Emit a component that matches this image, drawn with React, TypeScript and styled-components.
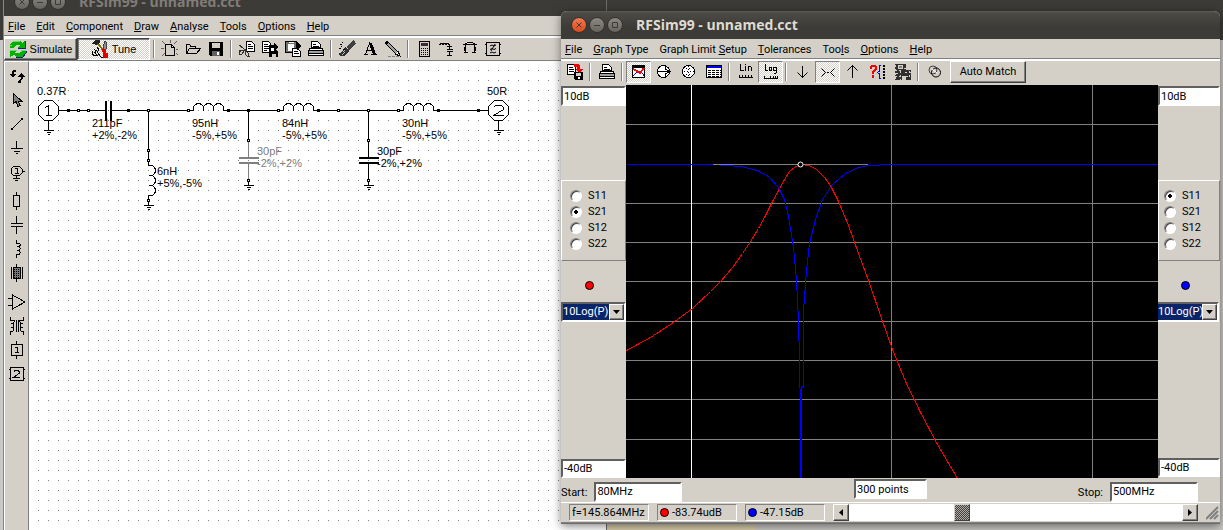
import React from "react";
import styled, { createGlobalStyle, css } from "styled-components";

const face = "#d4d0c8";
const uiFont = `Roboto, "Liberation Sans", sans-serif`;
const arial = `"Liberation Sans", Arial, sans-serif`;

const GlobalStyle = createGlobalStyle`
  * { box-sizing: border-box; }
  body { margin: 0; background: #c9c8c5; color: #000; font: 11px/16px ${uiFont}; }
  button, input, select { font: inherit; color: inherit; margin: 0; border-radius: 0; }
`;

const raised = css`
  border: 1px solid;
  border-color: #fff #404040 #404040 #fff;
  box-shadow: inset -1px -1px 0 #808080;
`;
const checker = css`
  background: repeating-conic-gradient(#fff 0 25%, ${face} 0 50%) 0 0 / 2px 2px;
`;

const Desktop = styled.main`
  position: relative;
  min-height: 100vh;
  overflow: hidden;
  background:
    linear-gradient(90deg, transparent 607px, #d8cca8 607px 755px, transparent 755px) bottom / 100% 5px no-repeat,
    linear-gradient(#3c3b37 40px, #c9c8c5 40px);
`;
const BackWindow = styled.section`
  position: absolute;
  top: -12px;
  left: 3px;
  bottom: 0;
  width: 604px;
  display: flex;
  flex-direction: column;
  background: ${face};
  border-left: 1px solid #8a8883;
  border-right: 1px solid #6f6d69;
`;
const FrontWindow = styled.section`
  position: absolute;
  top: 11px;
  left: 561px;
  right: 3px;
  bottom: 6px;
  display: flex;
  flex-direction: column;
  background: ${face};
  border-radius: 6px 6px 0 0;
  border-bottom: 1px solid #6f6d69;
  box-shadow: 0 2px 10px rgba(0, 0, 0, 0.5);
`;
const TitleBar = styled.header<{ $active?: boolean }>`
  flex: none;
  height: 28px;
  display: flex;
  align-items: center;
  padding: 0 10px;
  border-radius: 6px 6px 0 0;
  background: ${(p) => (p.$active ? "linear-gradient(#5c5b56, #4b4a45 2px, #3c3b37 16px)" : "#3c3b37")};
  color: ${(p) => (p.$active ? "#dfdbd2" : "#807d78")};
`;
const TitleText = styled.h1`
  margin: 0 0 0 11px;
  font: bold 14px/20px "Open Sans", sans-serif;
  white-space: nowrap;
`;
const TitleButton = styled.button<{ $close?: boolean }>`
  width: 16px;
  height: 16px;
  margin-right: 2px;
  padding: 0;
  border: 1px solid #33322e;
  border-radius: 50%;
  display: grid;
  place-items: center;
  color: #3c3b37;
  background: ${(p) => (p.$close ? "linear-gradient(#f37a50, #dc4a1c)" : "linear-gradient(#8a8881, #66645e)")};
`;
const MenuBar = styled.nav`
  flex: none;
  display: flex;
  height: 20px;
  padding-top: 2px;
  border-bottom: 1px solid #808080;
`;
const MenuItem = styled.button`
  border: 0;
  padding: 1px 7px 0 4px;
  height: 17px;
  line-height: 16px;
  background: none;
  white-space: nowrap;
`;
const ToolBar = styled.div<{ $front?: boolean }>`
  flex: none;
  display: flex;
  align-items: flex-start;
  height: ${(p) => (p.$front ? 26 : 25)}px;
  padding-left: ${(p) => (p.$front ? 1 : 0)}px;
  border-top: 2px solid #fff;
  border-bottom: ${(p) => (p.$front ? "0" : "1px solid #808080")};
`;
const Separator = styled.span<{ $tight?: boolean }>`
  flex: none;
  width: 2px;
  height: 18px;
  margin: ${(p) => (p.$tight ? "2px 3px 0 2px" : "2px 3px 0")};
  border-left: 1px solid #808080;
  border-right: 1px solid #fff;
`;
const ToolButton = styled.button<{ $size?: number; $down?: boolean }>`
  flex: none;
  width: ${(p) => p.$size ?? 23}px;
  height: 22px;
  padding: 0;
  display: grid;
  place-items: center;
  border: 1px solid transparent;
  background: none;
  ${(p) => p.$down && css`${checker} border-color: #808080 #fff #fff #808080;`}
`;
const TextButton = styled.button<{ $down?: boolean; $arial?: boolean }>`
  flex: none;
  height: 22px;
  padding: 0;
  width: ${(p) => (p.$arial ? 73 : 76)}px;
  margin-left: ${(p) => (p.$arial ? 0 : 3)}px;
  display: flex;
  align-items: center;
  justify-content: center;
  gap: 3px;
  background: ${face};
  font-family: ${(p) => (p.$arial ? arial : uiFont)};
  ${raised}
  ${(p) => p.$down && css`${checker} border-color: #404040 #fff #fff #404040; box-shadow: inset 1px 1px 0 #808080;`}
`;

const Workspace = styled.div`
  flex: 1;
  min-height: 0;
  display: flex;
`;
const Palette = styled.div`
  flex: none;
  width: 25px;
  padding-top: 2px;
  display: flex;
  flex-direction: column;
  gap: 5px;
  border-top: 1px solid #fff;
  border-left: 1px solid #fff;
  border-right: 1px solid #808080;
`;
const PaletteGroup = styled.div`
  display: flex;
  flex-direction: column;
`;
const PaletteButton = styled.button`
  height: 24px;
  padding: 0;
  border: 0;
  background: none;
  display: grid;
  place-items: center;
`;
const Canvas = styled.div`
  flex: 1;
  min-width: 0;
  background: #fff;
  overflow: hidden;
`;
const Drawing = styled.svg`
  display: block;
  width: 100%;
  height: 100%;
`;

const Plot = styled.div`
  flex: 1;
  min-height: 0;
  display: flex;
`;
const Side = styled.div<{ $right?: boolean }>`
  flex: none;
  width: ${(p) => (p.$right ? 62 : 65)}px;
  padding-top: 1px;
  padding-bottom: ${(p) => (p.$right ? 1 : 0)}px;
  display: flex;
  flex-direction: column;
`;
const Field = styled.input<{ $w?: number; $push?: boolean }>`
  width: ${(p) => (p.$w ? p.$w + "px" : "100%")};
  height: ${(p) => (p.$push ? 19 : 20)}px;
  margin-top: ${(p) => (p.$push ? "auto" : "0")};
  padding: 0 1px;
  background: #fff;
  border: 2px solid;
  border-color: #606060 #fff #fff #606060;
  outline: none;
`;
const Traces = styled.fieldset<{ $right?: boolean }>`
  margin: 74px 0 0;
  min-width: 0;
  height: 81px;
  border: 1px solid;
  border-color: #fff #808080 #808080 #fff;
  padding: 7px 0 0 ${(p) => (p.$right ? 5 : 8)}px;
`;
const Trace = styled.label`
  display: flex;
  align-items: center;
  gap: 6px;
  height: 16px;
  line-height: 18px;
`;
const Radio = styled.input`
  appearance: none;
  width: 12px;
  height: 12px;
  border: 1px solid;
  border-color: #808080 #fff #fff #808080;
  border-radius: 50%;
  box-shadow: inset 1px 1px 0 #404040;
  background: #fff;
  &:checked { background: radial-gradient(circle, #000 2px, #fff 2px); }
`;
const Dot = styled.span<{ $c: string; $big?: boolean }>`
  flex: none;
  width: 9px;
  height: 9px;
  border: 1px solid #000;
  border-radius: 50%;
  background: ${(p) => p.$c};
  ${(p) => p.$big && "align-self: center; margin: 20px 8px 12px 0;"}
`;
const Combo = styled.div<{ $right?: boolean }>`
  display: flex;
  height: 20px;
  border: 2px solid;
  border-color: #606060 #fff #fff #606060;
  ${(p) => p.$right && "border-left: 0; margin-right: 1px;"}
  background: #fff;
`;
const ComboSelect = styled.select`
  appearance: none;
  flex: 1;
  min-width: 0;
  border: 0;
  padding: 0;
  outline: 0;
  line-height: 14px;
  background: #0a246a;
  color: #fff;
`;
const ComboArrow = styled.span`
  flex: none;
  width: 15px;
  display: grid;
  place-items: center;
  background: ${face};
  ${raised}
`;
const Screen = styled.svg`
  display: block;
  flex: 1;
  min-width: 0;
  width: 0;
  height: 100%;
  background: #000;
`;
const Range = styled.div`
  flex: none;
  display: grid;
  grid-template-columns: 1fr auto 1fr;
  align-items: start;
  height: 24px;
  padding-top: 1px;
`;
const RangeCell = styled.label<{ $end?: boolean }>`
  display: flex;
  justify-content: ${(p) => (p.$end ? "flex-end" : "flex-start")};
  gap: 7px;
  padding: 3px ${(p) => (p.$end ? 22 : 0)}px 0 0;
  line-height: 22px;
`;
const Status = styled.footer`
  flex: none;
  height: 21px;
  display: flex;
  align-items: center;
  gap: 8px;
  padding: 0 0 0 8px;
  border-top: 1px solid #fff;
  border-bottom: 1px solid #808080;
`;
const Panel = styled.output`
  flex: none;
  width: 80px;
  height: 17px;
  padding-left: 2px;
  display: flex;
  align-items: center;
  gap: 3px;
  white-space: nowrap;
  border: 1px solid;
  border-color: #808080 #fff #fff #808080;
`;
const ScrollBar = styled.div`
  flex: 1;
  display: flex;
  height: 17px;
  background: #fff;
`;
const ScrollButton = styled.button`
  width: 16px;
  padding: 0;
  display: grid;
  place-items: center;
  background: ${face};
  ${raised}
`;
const ScrollRange = styled.input`
  appearance: none;
  flex: 1;
  min-width: 0;
  height: 17px;
  background: #fff;
  outline: 0;
  &::-webkit-slider-thumb {
    appearance: none;
    width: 16px;
    height: 17px;
    border: 1px solid;
    border-color: #d4d0c8 #404040 #404040 #d4d0c8;
    background: repeating-conic-gradient(#404040 0 25%, #b0aca4 0 50%) 0 0 / 2px 2px;
  }
`;

/* ---------- icons ---------- */
type IconProps = { children: React.ReactNode; s?: number };
const Icon = ({ children, s = 18 }: IconProps) => (
  <svg width={s} height={s} viewBox={`0 0 ${s} ${s}`} fill="none" stroke="#000" shapeRendering="crispEdges" aria-hidden="true">
    {children}
  </svg>
);

const icons: Record<string, React.ReactNode> = {
  simulate: (
    <Icon>
      <path d="M1 7V5l3-4h7l2 2 3-2v7h-7l2-3H7L5 8H1z" fill="#00b000" stroke="none" />
      <path d="M17 10v2l-3 5H7l-2-2-4 2v-7h7l-2 3h5l2-3z" fill="#00b000" stroke="none" />
      <path d="M4 1h7M1 5h2M1 10h7M12 12l1-2h4" stroke="#60e060" />
      <path d="M9 8.500h7.500V1M17 11v2l-3 4H7" stroke="#102080" />
    </Icon>
  ),
  tune: (
    <Icon>
      <path d="M1 3l4-3h4v3L5 5 3 4H1z" fill="#202020" stroke="none" />
      <path d="M7 4l6 7" stroke="#807000" strokeWidth="2" />
      <path d="M13 1l2 1v7l-1 2-2-4 1-3z" fill="#909090" stroke="#404040" />
      <path d="M1 10.500v3l2 2h3l-2-3 1-2-2-1M6 7l2 3-2 2 4 5h2" />
      <path d="M11 9h4v4h2v5h-5v-4z" fill="#e00000" stroke="none" />
    </Icon>
  ),
  new: (
    <Icon>
      <path d="M4.500 4.500h6l3 3v8h-9z" fill={face} />
      <path d="M10.500 4.500v3h3" />
      <path d="M1 1l3 3M9 0v3M16 1l-3 3M0 8h3M1 16l3-3M15 13l2 2M15 9h2" stroke="#606060" />
    </Icon>
  ),
  open: (
    <Icon>
      <path d="M2.500 13.500v-9h3l1 1.500h5v2M2.500 13.500l3-5h11l-4 5z" fill={face} />
    </Icon>
  ),
  save: (
    <Icon>
      <path d="M2 2h14v14H3l-1-1z" fill="#000" stroke="none" />
      <path d="M5 3h8v5H5z" fill="#d4d0c8" stroke="none" />
      <path d="M5 11h8v5H5z" fill="#606060" stroke="none" />
      <path d="M10 12h2v3h-2z" fill="#fff" stroke="none" />
    </Icon>
  ),
  cut: (
    <Icon>
      <path d="M8.500 1.500h5l3 3v7h-8z" fill="#fff" />
      <path d="M10 4.500h3M10 6.500h5M10 8.500h5" />
      <path d="M1 5l8 6M1 10h7M5 10l-4 2v2h3l3-4M8 11l-1 3 2 2h2l-1-3z" stroke="#303030" />
    </Icon>
  ),
  copy: (
    <Icon>
      <path d="M1.500 1.500h6l2 2v9h-8z" fill="#fff" />
      <path d="M3 4.500h4M3 6.500h5M3 8.500h5M3 10.500h3" />
      <path d="M8 5h5V3l4 4-2 3 2 2v5h-2v-3h-4v3H8z" fill="#000" stroke="none" />
      <path d="M10 8h3v3h-3z" fill="#fff" stroke="none" />
    </Icon>
  ),
  paste: (
    <Icon>
      <path d="M1.500 1.500h11v11h-11z" fill="#707070" />
      <path d="M4 4h6v7H4z" fill="#fff" stroke="none" />
      <path d="M4.500 2.500h5" stroke="#fff" />
      <path d="M8.500 8.500h5l3 3v5h-8z" fill="#fff" />
      <path d="M10 11.500h4M10 13.500h5" />
      <path d="M13 2l4 4-4 4z" fill="#000" stroke="none" />
    </Icon>
  ),
  print: (
    <Icon>
      <path d="M4.500 7.500v-6h6l3 3v3z" fill="#fff" />
      <path d="M6 4.500h3M6 6.500h6" />
      <path d="M1.500 10.500l2-2.500h11l2 2.500v5h-15z" fill="#fff" />
      <path d="M2 11h14v2H2z" fill="#a0a0a0" stroke="none" />
      <path d="M1.500 10.500h15M1.500 13.500h15" />
    </Icon>
  ),
  spray: (
    <Icon>
      <path d="M16 1l-7 7M17 3l-7 7" stroke="#404040" strokeWidth="2" />
      <path d="M7 7l4 4-5 5H2l-1-3 3-1z" fill="#303030" stroke="none" />
      <path d="M2 4.500h2M4 2.500h1M1 8.500h2M3 6.500h1M5 9.500h2" />
      <path d="M5 12l2-2M4 15l3-3" stroke="#bbb" />
    </Icon>
  ),
  text: (
    <Icon>
      <path d="M9 2L4.500 14M6 10.500h5M3 14.500h4M10 14.500h6" />
      <path d="M9.500 3.500l4 11" strokeWidth="3" />
    </Icon>
  ),
  pen: (
    <Icon>
      <path d="M2 2l11 11" strokeWidth="4" />
      <path d="M4 4l9 9" stroke="#a0a0a0" strokeWidth="2" />
      <path d="M11 14l5 2-2-5" fill="#fff" />
      <path d="M4 16.500h11" stroke="#808080" strokeDasharray="3 1" />
    </Icon>
  ),
  calc: (
    <Icon>
      <path d="M4.500 1.500h10v15h-10z" fill="#d4d0c8" />
      <path d="M6 3h7v3H6z" fill="#303030" stroke="none" />
      <path d="M6 8.500h7M6 10.500h7M6 12.500h7M6 14.500h7" strokeDasharray="1 1" />
    </Icon>
  ),
  lnet: (
    <Icon>
      <path d="M1 4.500h1l1-1h1v1h1l1-1h1v1h1l1-1h1v1h2M11.500 4v5M9 9.500h6M9 11.500h6M11.500 12v3M9 15.500h5M9 6.500h5" />
    </Icon>
  ),
  pinet: (
    <Icon>
      <path d="M4.500 12V4l2-1.500h5l2 1.500v8M2 4.500h14M3 12.500h4M11 12.500h4M4 7l-1 2 1 2M14 7l1 2-1 2" />
    </Icon>
  ),
  filter: (
    <Icon>
      <path d="M2.500 2.500h13v13h-13zM1 4.500h1M1 13.500h1M16 4.500h1M16 13.500h1" />
      <path d="M6 6l2-1 2 1 2-1M6 9.500l2-1 2 1 2-1M6 13l2-1 2 1 2-1M11 4l-4 7" shapeRendering="auto" />
    </Icon>
  ),
  rotate: (
    <Icon>
      <path d="M8 3.500H6L4.500 5v3M12 14.500v-1l1.500-1.500V9" strokeWidth="2" />
      <path d="M1 7h7l-3 4zM10 10h7l-4-4zM10 14h3v2h-3z" fill="#000" stroke="none" />
    </Icon>
  ),
  pointer: (
    <Icon>
      <path d="M5.500 2.500v10l2.500-2 2 5 2-1-2-4.500h3.500z" fill="#808080" />
    </Icon>
  ),
  wire: (
    <Icon>
      <path d="M4 14L14 4" shapeRendering="auto" />
      <path d="M3 13h2v2H3zM13 3h2v2h-2z" fill="#000" stroke="none" />
    </Icon>
  ),
  ground: (
    <Icon>
      <path d="M8.500 2v7M3 9.500h12M6 12.500h6M8 14.500h2" />
    </Icon>
  ),
  port: (
    <Icon>
      <path d="M5.500 3.500h6l2.500 2.500v4l-2.500 2.500h-6L3 10V6z" />
      <path d="M14 8.500h3M8.500 13v2M5 15.500h7M7 17.500h3M7 5.500h2v5M7 10.500h4" />
    </Icon>
  ),
  resistor: (
    <Icon>
      <path d="M8.500 0v3M5.500 3.500h6v11h-6zM8.500 15v3" />
    </Icon>
  ),
  capacitor: (
    <Icon>
      <path d="M8.500 0v7M3 7.500h12M3 10.500h12M8.500 11v7" />
    </Icon>
  ),
  inductor: (
    <Icon>
      <path d="M8.500 0v3h3l1 1.500-1 2h-3M11 6.500l1.500 2-1.500 2H8.500M11 10.500l1.500 2-1.500 2H8.500v3" />
    </Icon>
  ),
  line: (
    <Icon>
      <path d="M8.500 0v18M3.500 3v12M14.500 3v12" />
      <path d="M5.500 3.500h7v11h-7z" fill="#777" />
      <path d="M6 5.500h6M6 7.500h6M6 9.500h6M6 11.500h6M6 13.500h6" strokeDasharray="1 1" />
    </Icon>
  ),
  amp: (
    <Icon>
      <path d="M4.500 2v14L17 9zM0 5.500h4M0 12.500h4" />
    </Icon>
  ),
  transformer: (
    <Icon>
      <path d="M2.500 0v3h3l1 1-1 2H3M5 6.500l1 1.500-1 2H3M5 10.500l1 1.500-1 2H2.500v4M15.500 0v3h-3l-1 1 1 2H15M13 6.500L12 8l1 2h2M13 10.500L12 12l1 2h2.500v4M8.500 3v12M10.500 3v12" />
    </Icon>
  ),
  oneport: (
    <Icon>
      <path d="M3.500 3.500h11v11h-11zM8.500 0v3M8.500 15v3M7 6.500h2v5M7 11.500h4" />
    </Icon>
  ),
  twoport: (
    <Icon>
      <path d="M2.500 2.500h13v13h-13zM1 4.500h1M1 13.500h1M16 4.500h1M16 13.500h1M6 6.500l1-1h3l1 1v2l-5 3.500h6" />
    </Icon>
  ),
  export: (
    <Icon>
      <path d="M1.500 1.500h6l2 2v8h-8z" fill="#fff" />
      <path d="M3 4.500h4M3 6.500h5M3 8.500h5" />
      <path d="M8 9h9v8H9l-1-1z" fill="#000" stroke="none" />
      <path d="M10 10h5v3h-5z" fill="#d4d0c8" stroke="none" />
      <path d="M12 14h2v2h-2z" fill="#fff" stroke="none" />
      <path d="M8 1h4l2 2v3h3l-4 4-4-4h2V4H8z" fill="#f00000" stroke="none" />
    </Icon>
  ),
  graph: (
    <Icon>
      <path d="M2.500 2.500h12v12h-12z" fill="#fff" />
      <path d="M2 3.500h13" strokeWidth="2" />
      <path d="M3 13l5-5h3l3 5" stroke="#0000ff" />
      <path d="M3 6l4 2 3 2 4-5" stroke="#ff0000" strokeWidth="2" />
    </Icon>
  ),
  smith: (
    <Icon>
      <circle cx="8.500" cy="8.500" r="6" fill="#fff" />
      <path d="M2 8.500h13M10 2v4l5 2.500L10 11v4" />
    </Icon>
  ),
  polar: (
    <Icon>
      <circle cx="8.500" cy="8.500" r="6" fill="#fff" />
      <path d="M6 5.500h6M4 8.500h10M6 11.500h6M8.500 3v11" strokeDasharray="1 2" />
    </Icon>
  ),
  table: (
    <Icon>
      <path d="M1.500 2.500h15v12h-15z" fill="#fff" />
      <path d="M2 3h14v2H2z" fill="#0000ff" stroke="none" />
      <path d="M3 7.500h13M3 9.500h13M3 11.500h13M3 13.500h13" strokeDasharray="3 1" />
    </Icon>
  ),
  lin: (
    <Icon>
      <path d="M3.500 1v6M3 7.500h4M8.500 3v5M8.500 1v1M11.500 3v5M11 3.500h3M14.500 4v4M2 14.500h14M2.500 12v3M5.500 12v3M8.500 12v3M11.500 12v3M14.500 12v3" />
    </Icon>
  ),
  log: (
    <Icon>
      <path d="M3.500 1v6M3 7.500h3M7.500 4.500h2v3h-2zM11.500 4.500h3v3h-3zM14.500 8v2M12 10.500h2M2 15.500h14M2.500 13v3M8.500 13v3M11.500 13v3M13.500 13v3M15.500 13v3" />
    </Icon>
  ),
  down: (
    <Icon>
      <path d="M8.500 3v12M3.500 9.500l5 5 5-5" shapeRendering="auto" />
    </Icon>
  ),
  centre: (
    <Icon>
      <path d="M2.500 5.500l4 4-4 4M15.500 5.500l-4 4 4 4" shapeRendering="auto" />
      <path d="M8 9h2v1H8z" fill="#000" stroke="none" />
    </Icon>
  ),
  up: (
    <Icon>
      <path d="M8.500 2v13M3.500 7.500l5-5 5 5" shapeRendering="auto" />
    </Icon>
  ),
  query: (
    <Icon>
      <path d="M2 6V4l1-1h3l1 1v2L4 9v2M4 12v3" stroke="#f00000" strokeWidth="2" />
      <path d="M12 2.500h-1.500V8L8.500 9.500l2 1.500v4.500H12" stroke="#0000ff" />
      <path d="M15 2v14" strokeWidth="2" strokeDasharray="2 1" />
    </Icon>
  ),
  gears: (
    <Icon>
      <path d="M1 1h11v6h5v10h-5v-4H8v4H1z" fill="#303030" stroke="none" />
      <path d="M4.500 2.500h4v3h-4z" stroke="#d4d0c8" fill="#808080" />
      <path d="M1 7.500h7M2 10.500h4M1 13.500h7M11 9.500h6M12 13.500h4M10 5.500h3M1.500 2v14M15.500 8v8M6.500 8v9" stroke="#d4d0c8" strokeDasharray="2 2" />
    </Icon>
  ),
  rings: (
    <Icon>
      <g shapeRendering="auto">
        <circle cx="7" cy="7" r="4" stroke="#404040" />
        <circle cx="10" cy="9.500" r="4.500" />
        <path d="M6 6l5 4" stroke="#fff" />
      </g>
    </Icon>
  ),
};

/* ---------- window chrome ---------- */
const Title = ({ active }: { active?: boolean }) => (
  <TitleBar $active={active}>
    <TitleButton $close={active} aria-label="Close">
      <svg width="8" height="8" stroke="currentColor" aria-hidden="true"><path d="M1.500 1.500l5 5M6.500 1.500l-5 5" /></svg>
    </TitleButton>
    <TitleButton aria-label="Minimize">
      <svg width="8" height="8" stroke="currentColor" aria-hidden="true"><path d="M1 4.500h6" /></svg>
    </TitleButton>
    <TitleButton aria-label="Maximize">
      <svg width="8" height="8" stroke="currentColor" fill="none" aria-hidden="true"><path d="M1.500 1.500h5v5h-5z" /></svg>
    </TitleButton>
    <TitleText>RFSim99 - unnamed.cct</TitleText>
  </TitleBar>
);

/* "&" marks the mnemonic letter of a menu label */
const Menus = ({ items }: { items: string[] }) => (
  <MenuBar>
    {items.map((item) => {
      const [before, after] = item.split("&");
      return (
        <MenuItem key={item}>
          {before}<u>{after[0]}</u>{after.slice(1)}
        </MenuItem>
      );
    })}
  </MenuBar>
);

const Tools = ({ names, size, down = [] }: { names: string[]; size?: number; down?: string[] }) => (
  <>
    {names.map((n) => (
      <ToolButton key={n} $size={size} $down={down.includes(n)} aria-label={n}>{icons[n]}</ToolButton>
    ))}
  </>
);

/* ---------- schematic ---------- */
const Node = ({ x, y, solid }: { x: number; y: number; solid?: boolean }) => (
  <rect x={x - 1} y={y - 1} width="2" height="2" fill={solid ? "#000" : "#fff"} stroke="#000" />
);
const Ground = ({ x, y }: { x: number; y: number }) => (
  <path d={`M${x} ${y - 5}V${y}M${x - 5} ${y}h10M${x - 2} ${y + 2}h4M${x - 1} ${y + 4}h2`} />
);
const Coil = ({ x, y, vertical }: { x: number; y: number; vertical?: boolean }) => (
  <path
    transform={`translate(${x} ${y})${vertical ? " rotate(90)" : ""}`}
    d="M0 0H5V-4L7-6L9-7H11L13-6L15-4V0V-4L17-6L19-7H21L23-6L25-4V0V-4L27-6L29-7H31L33-6L35-4V0H40"
  />
);
const ShuntCap = ({ x, color }: { x: number; color: string }) => (
  <g>
    <path d={`M${x} 110v30`} />
    <path d={`M${x} 140v18M${x} 163v17`} stroke={color} />
    <path d={`M${x - 10} 157.500h20M${x - 10} 162.500h20`} stroke={color} strokeWidth="2" />
    <Node x={x} y={140} />
    <Ground x={x} y={185} />
    <Node x={x} y={180} />
  </g>
);
const Port = ({ x, n }: { x: number; n: number }) => (
  <g>
    <path d={`M${x - 4} 100h8l6 6v8l-6 6h-8l-6-6v-8z`} fill="#fff" />
    <path d={n === 1 ? `M${x - 3} 107l3-2v10M${x - 3} 115h6` : `M${x - 5} 107l2-2h6l2 2v2l-10 6h10`} />
    <Ground x={x} y={130} />
    <path d={`M${x} 120v6`} />
  </g>
);

const labels: [number, number, string, string?][] = [
  [37, 95, "0.37R"], [92, 127, "211pF"], [92, 139, "+2%,-2%"],
  [157, 175, "6nH"], [157, 187, "+5%,-5%"],
  [192, 127, "95nH"], [192, 139, "-5%,+5%"],
  [257, 155, "30pF", "#808080"], [257, 167, "-2%,+2%", "#808080"],
  [282, 127, "84nH"], [282, 139, "-5%,+5%"],
  [377, 155, "30pF"], [377, 167, "-2%,+2%"],
  [402, 127, "30nH"], [402, 139, "-5%,+5%"], [487, 95, "50R"],
];

const Schematic = () => (
  <Drawing aria-label="Circuit schematic">
    <defs>
      <pattern id="dots" x="9" y="9" width="10" height="10" patternUnits="userSpaceOnUse">
        <rect width="1" height="1" fill="#808080" />
      </pattern>
    </defs>
    <rect width="100%" height="100%" fill="url(#dots)" />
    <g transform="translate(-29 -61)">
      <g transform="translate(.5 .5)" fill="none" stroke="#000" shapeRendering="crispEdges">
        <path d="M58 110H106M111 110H188M148 110V160M228 110H278M318 110H398M438 110H488" />
        <path d="M105.500 100v20M110.500 100v20" strokeWidth="2" />
        <Coil x={188} y={110} />
        <Coil x={278} y={110} />
        <Coil x={398} y={110} />
        <Coil x={148} y={160} vertical />
        <Ground x={148} y={205} />
        <ShuntCap x={248} color="#808080" />
        <ShuntCap x={368} color="#000" />
        <Port x={48} n={1} />
        <Port x={498} n={2} />
        {[68, 128, 228, 248, 318, 438, 478].map((x) => <Node key={x} x={x} y={110} solid />)}
        {[78, 88, 148, 188, 278, 338, 368, 398].map((x) => <Node key={x} x={x} y={110} />)}
        {[150, 160, 200].map((y) => <Node key={y} x={148} y={y} />)}
      </g>
      <g fontFamily={arial} fontSize="11">
        {labels.map(([x, y, t, c], i) => <text key={i} x={x} y={y} fill={c ?? "#000"}>{t}</text>)}
      </g>
    </g>
  </Drawing>
);

/* ---------- response graph ---------- */
const s21 = "0,265 24,252 44,239 66,223 84,206 94,196 106,182 116,168 124,156 132,143 139,130 146,116 152,105 158,94 163,86 169,81 174,79 182,80 189,83 198,92 204,100 212,116 222,140 232,168 242,195 254,230 266,264 279,296 294,327 311,359 331,393";
const s11 = "0,79 86,79 114,81 131,85 142,91 152,102 158,114 162,131 167,162 170,195 172,235 173,275 174,330 174,393";
const s11b = "175,393 175,302 177,301 177,225 180,185 183,158 189,134 196,114 206,99 219,88 232,82 242,80 266,79 532,79";

const Response = () => (
  <Screen viewBox="0 0 532 393" preserveAspectRatio="none" fill="none" shapeRendering="crispEdges" role="img" aria-label="Frequency response">
    <path stroke="#808080" d="M0 39.500H532M0 118.500H532M0 157.500H532M0 196.500H532M0 236.500H532M0 275.500H532M0 314.500H532M0 354.500H532M265.500 0V393M466.500 0V393" />
    <path stroke="#fff" d="M65.500 0V393" />
    <g transform="translate(.5 .5)">
      <polyline points={s21} stroke="#f00" />
      <polyline points={s11} stroke="#00f" />
      <polyline points={s11b} stroke="#00f" />
      <path d="M86 79H241" stroke="#808080" />
    </g>
    <circle cx="174.500" cy="79.500" r="2.500" stroke="#fff" fill="#000" shapeRendering="auto" />
  </Screen>
);

const SidePanel = ({ name, right, selected, color }: { name: string; right?: boolean; selected: string; color: string }) => (
  <Side $right={right}>
    <Field defaultValue="10dB" aria-label={`${name} upper limit`} />
    <Traces $right={right} aria-label={`${name} trace`}>
      {["S11", "S21", "S12", "S22"].map((s) => (
        <Trace key={s}>
          <Radio type="radio" name={name} defaultChecked={s === selected} />
          {s}
        </Trace>
      ))}
    </Traces>
    <Dot $c={color} $big />
    <Combo $right={right}>
      <ComboSelect aria-label={`${name} scale`}><option>10Log(P)</option></ComboSelect>
      <ComboArrow aria-hidden="true"><svg width="7" height="4"><path d="M0 0h7L3.500 4z" /></svg></ComboArrow>
    </Combo>
    <Field defaultValue="-40dB" aria-label={`${name} lower limit`} $push />
  </Side>
);

export default function App() {
  return (
    <>
      <GlobalStyle />
      <Desktop>
        <BackWindow>
          <Title />
          <Menus items={["&File", "&Edit", "&Component", "&Draw", "&Analyse", "&Tools", "&Options", "&Help"]} />
          <ToolBar>
            <TextButton $arial>{icons.simulate}Simulate</TextButton>
            <TextButton $arial $down>{icons.tune}Tune</TextButton>
            <Separator />
            <Tools names={["new", "open", "save"]} />
            <Separator />
            <Tools names={["cut", "copy", "paste", "print"]} />
            <Separator />
            <Tools names={["spray", "text", "pen"]} />
            <Separator />
            <Tools names={["calc", "lnet", "pinet", "filter"]} />
          </ToolBar>
          <Workspace>
            <Palette>
              {[
                ["rotate", "pointer", "wire", "ground", "port"],
                ["resistor", "capacitor", "inductor", "line"],
                ["amp", "transformer", "oneport", "twoport"],
              ].map((group) => (
                <PaletteGroup key={group[0]}>
                  {group.map((n) => <PaletteButton key={n} aria-label={n}>{icons[n]}</PaletteButton>)}
                </PaletteGroup>
              ))}
            </Palette>
            <Canvas><Schematic /></Canvas>
          </Workspace>
        </BackWindow>

        <FrontWindow>
          <Title active />
          <Menus items={["&File", "&Graph Type", "Graph Limit &Setup", "&Tolerances", "Too&ls", "&Options", "&Help"]} />
          <ToolBar $front>
            <Tools size={25} names={["export"]} />
            <Separator $tight />
            <Tools size={25} names={["print"]} />
            <Separator $tight />
            <Tools size={25} names={["graph", "smith", "polar", "table"]} down={["graph"]} />
            <Separator $tight />
            <Tools size={25} names={["lin", "log"]} down={["log"]} />
            <Separator $tight />
            <Tools size={25} names={["down", "centre", "up", "query", "gears"]} down={["centre"]} />
            <Separator $tight />
            <Tools size={25} names={["rings"]} />
            <TextButton>Auto Match</TextButton>
          </ToolBar>
          <Plot>
            <SidePanel name="Left axis" selected="S21" color="#f00" />
            <Response />
            <SidePanel name="Right axis" right selected="S11" color="#00f" />
          </Plot>
          <Range>
            <RangeCell>Start: <Field defaultValue="80MHz" $w={88} /></RangeCell>
            <Field defaultValue="300 points" aria-label="Points" $w={73} />
            <RangeCell $end>Stop: <Field defaultValue="500MHz" $w={88} /></RangeCell>
          </Range>
          <Status>
            <Panel>f=145.864MHz</Panel>
            <Panel><Dot $c="#f00" />-83.74udB</Panel>
            <Panel><Dot $c="#00f" />-47.15dB</Panel>
            <ScrollBar>
              <ScrollButton aria-label="Scroll left"><svg width="4" height="7"><path d="M4 0v7L0 3.500z" /></svg></ScrollButton>
              <ScrollRange type="range" defaultValue={33} aria-label="Marker frequency" />
              <ScrollButton aria-label="Scroll right"><svg width="4" height="7"><path d="M0 0v7l4-3.500z" /></svg></ScrollButton>
            </ScrollBar>
            <svg width="14" height="14" aria-hidden="true">
              <path d="M0 13L12 1M4 13l8-8M8 13l4-4" stroke="#808080" strokeWidth="2" />
            </svg>
          </Status>
        </FrontWindow>
      </Desktop>
    </>
  );
}
